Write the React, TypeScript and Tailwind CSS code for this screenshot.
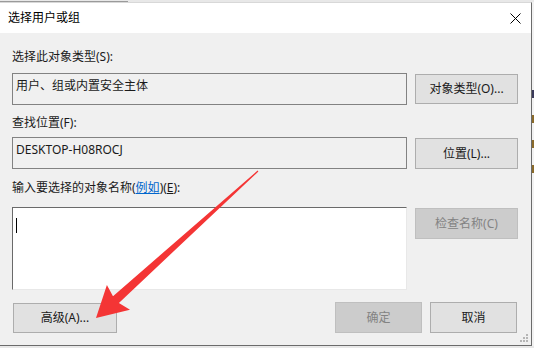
const font = "font-['Noto_Sans','Noto_Sans_CJK_SC',sans-serif]";

function Btn({ label, disabled = false, className = "" }: { label: string; disabled?: boolean; className?: string }) {
  return (
    <button
      disabled={disabled}
      className={`flex items-center justify-center border text-[12px] leading-none ${
        disabled
          ? "bg-[#cccccc] border-[#bfbfbf] text-[#838383]"
          : "bg-[#e1e1e1] border-[#adadad] text-[#1a1a1a]"
      } ${className}`}
    >
      {label}
    </button>
  );
}

function ReadBox({ text }: { text: string }) {
  return (
    <div className="w-[395px] h-[32px] border border-[#828282] bg-[#f0f0f0] px-[3px] pt-[4px] text-[12px] leading-4 text-[#1a1a1a]">
      {text}
    </div>
  );
}

export default function App() {
  return (
    <div className={`relative w-[534px] h-[348px] bg-[#e8e8e8] flex flex-col overflow-hidden ${font}`}>
      {/* strip above the dialog */}
      <div className="h-[2px] flex">
        <div className="w-[128px] border-b border-[#9a9a9a]" />
      </div>
      <div className="flex h-[344px]">
        <div className="w-[532px] flex flex-col border-r border-b border-[#6b6b6b] border-t border-t-[#d8d8d8]">
          {/* title bar */}
          <div className="h-[30px] bg-white flex items-center justify-between pl-2 pr-[10px]">
            <span className="text-[12px] text-black">选择用户或组</span>
            <svg width="11" height="11" viewBox="0 0 11 11">
              <path d="M0.5 0.5 L10.5 10.5 M10.5 0.5 L0.5 10.5" stroke="#000" strokeWidth="1" />
            </svg>
          </div>

          {/* body */}
          <div className="relative flex-1 bg-[#f0f0f0] pl-3 pt-4 text-[#1a1a1a]">
            <div className="h-4 text-[12px] leading-4">选择此对象类型(S):</div>
            <div className="flex gap-2 mt-2">
              <ReadBox text="用户、组或内置安全主体" />
              <Btn label="对象类型(O)..." className="w-[103px] h-[30px] mt-px" />
            </div>

            <div className="h-4 mt-[10px] text-[12px] leading-4">查找位置(F):</div>
            <div className="flex gap-2 mt-[6px]">
              <ReadBox text="DESKTOP-H08ROCJ" />
              <Btn label="位置(L)..." className="w-[103px] h-[31px] mt-px" />
            </div>

            <div className="h-4 mt-[11px] text-[12px] leading-4">
              输入要选择的对象名称(
              <span className="text-[#0066cc] underline">例如</span>)(<span className="underline">E</span>):
            </div>
            <div className="flex gap-2 mt-[11px]">
              <div className="w-[395px] h-[83px] bg-white border border-t-[#6a6a6a] border-l-[#6a6a6a] border-r-[#e8e8e8] border-b-[#e8e8e8] pl-[3px] pt-[10px]">
                <div className="w-px h-[15px] bg-black" />
              </div>
              <Btn label="检查名称(C)" disabled className="w-[103px] h-[31px] mt-px" />
            </div>

            <div className="flex mt-[12px] h-[31px]">
              <Btn label="高级(A)..." className="w-[104px] h-[30px] ml-px mt-px" />
              <div className="flex-1" />
              <Btn label="确定" disabled className="w-[87px] h-[31px]" />
              <Btn label="取消" className="w-[87px] h-[31px] ml-[8px] mr-[14px]" />
            </div>

            {/* size grip */}
            <svg className="absolute right-[2px] bottom-[2px]" width="10" height="10" viewBox="0 0 10 10">
              <g fill="#b5b5b5">
                <rect x="7" y="1" width="2" height="2" />
                <rect x="4" y="4" width="2" height="2" />
                <rect x="7" y="4" width="2" height="2" />
                <rect x="1" y="7" width="2" height="2" />
                <rect x="4" y="7" width="2" height="2" />
                <rect x="7" y="7" width="2" height="2" />
              </g>
            </svg>
          </div>
        </div>
        {/* background window peeking out on the right */}
        <div className="flex-1 bg-[#f2f2f2] flex flex-col pt-[88px] gap-[17px]">
          <div className="h-[8px] w-[2px] bg-[#3a3a5a]" />
          <div className="h-[8px] w-[2px] bg-[#8a6a2a]" />
          <div className="h-[8px] w-[2px] bg-[#8a6a2a]" />
          <div className="h-[8px] w-[2px] bg-[#8a6a2a]" />
        </div>
      </div>

      {/* red annotation arrow */}
      <svg className="absolute inset-0 pointer-events-none" width="534" height="348" viewBox="0 0 534 348">
        <polygon
          fill="#f43535"
          points="258.4,171.5 118.9,302.9 130.0,309.8 96,318 106.9,284.9 113.0,296.2 257.6,170.5"
        />
      </svg>
    </div>
  );
}
